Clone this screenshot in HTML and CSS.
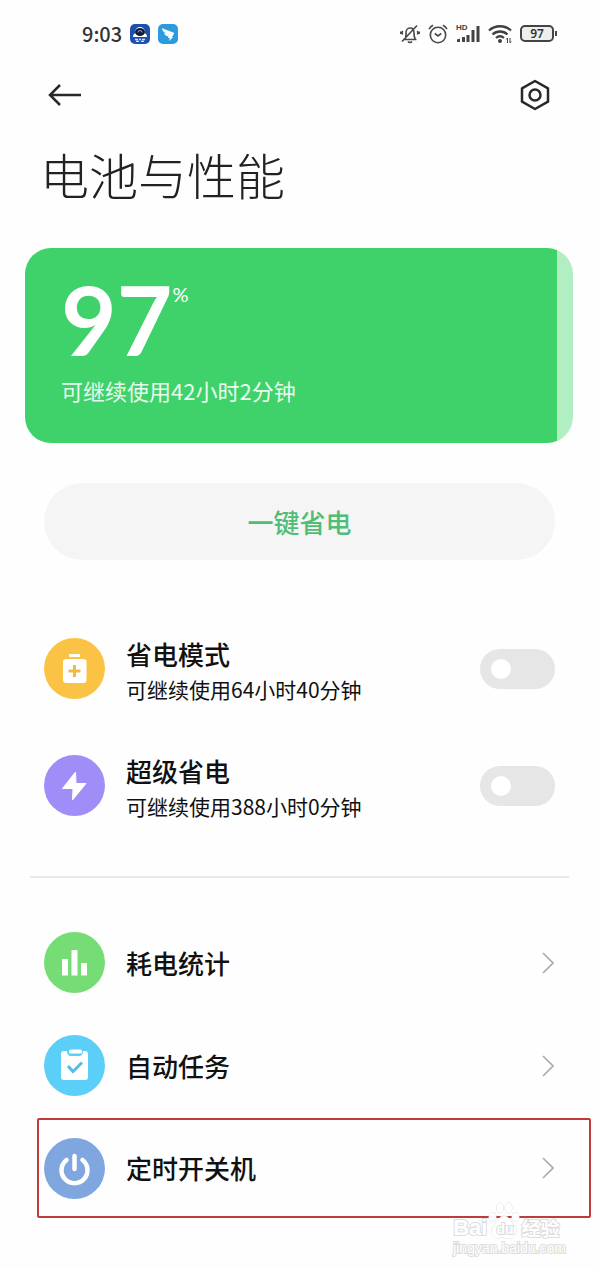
FILE: index.html
```html
<!DOCTYPE html>
<html lang="zh-CN">
<head>
<meta charset="utf-8">
<meta name="viewport" content="width=device-width, initial-scale=1">
<title>电池与性能</title>
<link rel="stylesheet" href="styles.css">
</head>
<body>
<div class="screen">
  <div class="status">
    <div class="status-group">
      <time class="clock">9:03</time>
      <svg class="app" viewBox="0 0 20 20" aria-hidden="true"><rect width="20" height="20" rx="5" fill="#1c50ae"/><path d="M3 13c0-2 .6-3 2-3.500V8a5 5 0 0 1 10 0v1.500c1.400.5 2 1.500 2 3.500Z" fill="#fff"/><ellipse cx="10" cy="8" rx="5" ry="4" fill="#111c2c"/><path d="M8 8.500a2 2 0 0 1 4 0" fill="none" stroke="#8caadb"/><path d="M5 15.500h3m1 0h2m1 0h3M6 17.300h3m2 0h3" stroke="#cfe2ff" stroke-width="1.300"/></svg>
      <svg class="app" viewBox="0 0 20 20" aria-hidden="true"><rect width="20" height="20" rx="5" fill="#2b9bde"/><path d="M4 4c3 1.800 7.500 3 11.500 4.600.7.400.5 1.300-.1 2.300l-1.600 2h1.500L11 17l.8-3H10l.6-1.500C8 12 6.500 10.600 6 9.200l2.500.4C6 8.500 4.300 6.800 4 4Z" fill="#fff"/></svg>
    </div>
    <div class="status-group status-right">
      <svg width="20" height="20" viewBox="0 0 20 20" class="line" aria-hidden="true"><path d="M3.500 15.500h13M5 15c1.200-1.500 1-3 1-6 0-3 1.500-5 4-5s4 2 4 5c0 3 0 4.500 1.300 6M8 17.500c1 1.300 3 1.300 4 0M17 1.500 2 17.500M2.700 7c-.8 1.200-.8 2.500 0 3.500M.8 7.500v2.500M17.300 7c.8 1.200.8 2.500 0 3.500M19.200 7.500v2.500"/></svg>
      <svg width="20" height="20" viewBox="0 0 20 20" class="line" aria-hidden="true"><circle cx="10" cy="11" r="7.700"/><path d="M6.800 9.500 10 12l3.200-2.500M1 5.200C2 3.500 3.300 2.300 5 1.300M19 5.200C18 3.500 16.700 2.300 15 1.300"/></svg>
      <span class="signal">
        <span class="hd">HD</span>
        <svg width="24" height="20" viewBox="0 0 24 20" aria-hidden="true"><path d="M1 18v-2.500l3-1V18ZM6 18v-5h3v5ZM10.500 18v-7h3v7ZM15.500 18V6h3v12ZM20.500 18V2h3v16Z" fill="#444"/></svg>
      </span>
      <svg width="24" height="20" viewBox="0 0 24 20" aria-hidden="true"><path d="M1 6.500C7 .8 17 .8 23 6.500M4.500 10.500c4.300-4 10.700-4 15 0M8 14c2.500-2.200 5.500-2.200 8 0" fill="none" stroke="#3f3f3f" stroke-width="2.300"/><circle cx="12" cy="17" r="2" fill="#3f3f3f"/><path d="M19.500 19v-5l-1.300 1.500M22 14v5l1.300-1.500" fill="none" stroke="#444"/></svg>
      <span class="battery">97</span>
    </div>
  </div>

  <header class="toolbar">
    <button class="icon-button" type="button" aria-label="返回"><svg width="34" height="24" viewBox="0 0 34 24" class="nav-line"><path d="M13 2 3 12l10 10M3 12h31"/></svg></button>
    <button class="icon-button" type="button" aria-label="设置"><svg width="30" height="32" viewBox="0 0 30 32" class="nav-line"><path d="M15 2 28 9.300v13.400L15 30 2 22.700V9.300Z" stroke-linejoin="round"/><circle cx="15" cy="16" r="5.500"/></svg></button>
  </header>

  <main>
    <h1 class="title">电池与性能</h1>

    <section class="charge">
      <p class="level">97<span class="percent">%</span></p>
      <p class="remaining">可继续使用42小时2分钟</p>
    </section>

    <button class="save" type="button">一键省电</button>

    <section class="modes">
      <label class="row mode">
        <svg class="badge" viewBox="0 0 61 61" aria-hidden="true"><circle cx="30.500" cy="30.500" r="30.500" fill="#fbc345"/><rect x="25" y="16" width="11" height="3" rx="1" fill="#fff"/><rect x="19" y="21" width="23.500" height="24" rx="3" fill="#fff"/><path d="M30.500 27v12M24.500 33h12" stroke="#efb947" stroke-width="3"/></svg>
        <span class="text"><span class="name">省电模式</span><span class="detail">可继续使用64小时40分钟</span></span>
        <input class="switch" type="checkbox" role="switch">
      </label>
      <label class="row mode">
        <svg class="badge" viewBox="0 0 61 61" aria-hidden="true"><circle cx="30.500" cy="30.500" r="30.500" fill="#a08df8"/><path d="M31.500 17 18.500 33.500H29L28.500 45 42 28.500H32Z" fill="#fff" stroke="#fff" stroke-linejoin="round"/></svg>
        <span class="text"><span class="name">超级省电</span><span class="detail">可继续使用388小时0分钟</span></span>
        <input class="switch" type="checkbox" role="switch">
      </label>
    </section>

    <hr class="divider">

    <nav>
      <a class="row" href="#stats">
        <svg class="badge" viewBox="0 0 61 61" aria-hidden="true"><circle cx="30.500" cy="30.500" r="30.500" fill="#76dc75"/><path d="M18 27h6v16.500h-6ZM27.500 18h6v25.500h-6ZM37 31h6v12.500h-6Z" fill="#fff"/></svg>
        <span class="text name">耗电统计</span>
        <svg class="chevron" viewBox="0 0 12 22" aria-hidden="true"><path d="m1 1 10 10L1 21"/></svg>
      </a>
      <a class="row" href="#tasks">
        <svg class="badge" viewBox="0 0 61 61" aria-hidden="true"><circle cx="30.500" cy="30.500" r="30.500" fill="#5bcff8"/><path d="M20 16h3c0 3 1.500 5 4 5h8c2.500 0 4-2 4-5h2q3 0 3 3v23q0 3-3 3H20q-3 0-3-3V19q0-3 3-3Z" fill="#fff"/><rect x="25" y="14.500" width="13" height="4" rx="1.500" fill="#fff"/><path d="m24 31 5 5.500 9-9" fill="none" stroke="#55bfe5" stroke-width="3"/></svg>
        <span class="text name">自动任务</span>
        <svg class="chevron" viewBox="0 0 12 22" aria-hidden="true"><path d="m1 1 10 10L1 21"/></svg>
      </a>
      <a class="row marked" href="#schedule">
        <svg class="badge" viewBox="0 0 61 61" aria-hidden="true"><circle cx="30.500" cy="30.500" r="30.500" fill="#7fa6de"/><path d="M22.500 22a13 13 0 1 0 16 0M30.500 18v13" fill="none" stroke="#fff" stroke-width="4.500" stroke-linecap="round"/></svg>
        <span class="text name">定时开关机</span>
        <svg class="chevron" viewBox="0 0 12 22" aria-hidden="true"><path d="m1 1 10 10L1 21"/></svg>
      </a>
    </nav>
  </main>

  <div class="watermark">
    <div class="brand">
      <span class="latin">Bai</span>
      <span class="paw"><svg viewBox="0 0 32 38" aria-hidden="true"><g fill="#fff" stroke="#ddd"><ellipse cx="4.500" cy="15" rx="3.500" ry="4.500"/><ellipse cx="12" cy="6" rx="3.500" ry="5"/><ellipse cx="20.500" cy="6" rx="3.500" ry="5"/><ellipse cx="27.500" cy="15" rx="3.500" ry="4.500"/><path d="M16 14c5 0 6 5 9 8 5 4 4 14-3 14-4 0-8-1-12 0-7 0-8-10-3-14 3-3 4-8 9-8Z"/></g></svg><span class="du">du</span></span>
      <span class="han">经验</span>
    </div>
    <div class="site">jingyan.baidu.com</div>
  </div>
</div>
</body>
</html>
```
FILE: styles.css
```css
* { box-sizing: border-box; }

body {
  margin: 0;
  background: #fefefe;
  color: #111;
  font-family: "Noto Sans CJK SC", sans-serif;
}

button { border: 0; font: inherit; cursor: pointer; }
p, h1 { margin: 0; }
svg { display: block; flex: none; }

.screen {
  position: relative;
  min-height: 100vh;
  padding-bottom: 50px;
}

.status {
  display: flex;
  align-items: center;
  justify-content: space-between;
  height: 67px;
  padding: 0 41px 0 82px;
}

.status-group { display: flex; align-items: center; gap: 8px; }
.clock { color: #333; font-size: 20px; font-weight: 500; line-height: 24px; }
.app { width: 20px; height: 20px; }
.line { fill: none; stroke: #484848; stroke-width: 1.6; }
.signal { position: relative; }

.hd {
  position: absolute;
  top: 0;
  left: 0;
  color: #444;
  font: 700 8px/8px "Liberation Sans", sans-serif;
}

.battery {
  position: relative;
  width: 34px;
  height: 17px;
  margin-right: 4px;
  border: 2px solid #444;
  border-radius: 5px;
  background: #eee;
  color: #333;
  font: 600 12px/13px "Noto Sans", sans-serif;
  text-align: center;
}

.battery::after {
  content: "";
  position: absolute;
  top: 4px;
  right: -5px;
  width: 2px;
  height: 5px;
  background: #444;
}

.toolbar {
  display: flex;
  align-items: center;
  justify-content: space-between;
  height: 56px;
  padding: 0 49px 0 47px;
}

.icon-button { padding: 0; background: none; }
.nav-line { fill: none; stroke: #282828; stroke-width: 2.5; }

.title {
  margin: 21px 40px 44px;
  color: #222;
  font-size: 49px;
  font-weight: 300;
  line-height: 60px;
}

.charge {
  margin: 0 26px 40px 25px;
  padding: 30px 36px 37px;
  border-radius: 26px;
  background: linear-gradient(to right, #40d26a 97%, #b1efc2 97%);
  color: #fff;
}

.level {
  display: flex;
  align-items: flex-start;
  margin-bottom: 14px;
  font: 700 96px/82px Lato, sans-serif;
}

.percent { font-size: 20px; font-weight: 400; line-height: 32px; }
.remaining { color: #e9fbee; font-size: 22px; line-height: 32px; }

.save {
  display: block;
  width: calc(100% - 88px);
  height: 77px;
  margin: 0 44px 50px;
  border-radius: 39px;
  background: #f5f5f5;
  color: #50bd76;
  font-size: 26px;
  font-weight: 500;
}

.row {
  display: flex;
  align-items: center;
  gap: 21px;
  height: 103px;
  padding: 0 44px;
  color: inherit;
  text-decoration: none;
}

.mode { height: 117px; }
.badge { width: 61px; height: 61px; }
.text { flex: 1; }
.mode .text { padding-top: 5px; }
.name { font-size: 26px; font-weight: 500; line-height: 36px; }
.mode .name { display: block; }
.detail { display: block; font-size: 21px; line-height: 34px; }

.switch {
  appearance: none;
  display: flex;
  align-items: center;
  width: 75px;
  height: 40px;
  margin: 0;
  padding: 0 11px;
  border-radius: 20px;
  background: #e6e6e6;
}

.switch::before {
  content: "";
  width: 20px;
  height: 20px;
  border-radius: 50%;
  background: #fff;
}

.switch:checked { justify-content: flex-end; background: #40d26a; }

.divider {
  height: 2px;
  margin: 32px 30px 33px;
  border: 0;
  background: #e9e9e9;
}

.chevron {
  width: 12px;
  height: 22px;
  margin-right: 1px;
  fill: none;
  stroke: #aaa;
  stroke-width: 1.6;
}

.marked {
  height: 100px;
  margin: 1px 8px 0 37px;
  padding: 0 34px 0 5px;
  border: 2px solid #bd3b38;
  border-radius: 2px;
}

.watermark {
  position: absolute;
  right: 33px;
  bottom: 12px;
  color: #fff;
  -webkit-text-stroke: 2px #ddd;
  paint-order: stroke fill;
}

.brand { display: flex; align-items: flex-end; gap: 1px; }
.latin { font: 700 22px/24px "Liberation Sans", sans-serif; }
.paw { position: relative; width: 32px; }

.du {
  position: absolute;
  bottom: 4px;
  left: 8px;
  font: 700 14px/14px "Liberation Sans", sans-serif;
}

.han { font-size: 19px; font-weight: 700; line-height: 24px; }
.site { font: 400 14px/16px "Liberation Sans", sans-serif; }
```
